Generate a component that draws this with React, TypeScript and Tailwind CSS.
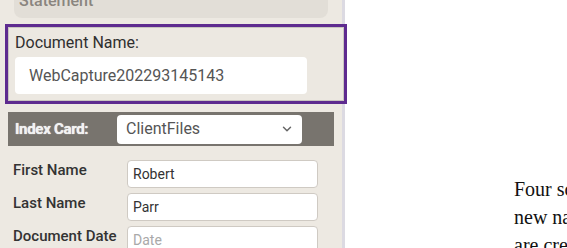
import { ChevronDown } from 'lucide-react';

const fields = [
    { label: 'First Name', value: 'Robert' },
    { label: 'Last Name', value: 'Parr' },
    { label: 'Document Date', value: '', placeholder: 'Date' },
];

export default function App() {
    return (
        <div className="flex h-[248px] w-[567px] overflow-hidden bg-white font-['Roboto',sans-serif]">
            {/* Sidebar */}
            <div className="relative z-10 flex w-[342px] shrink-0 flex-col bg-[#ede9e2]">
                <div className="mx-[14px] -mt-[14px] h-[32px] shrink-0 rounded-b-[8px] bg-[#e2ded7] px-[5px] pt-[6px] text-[16px] font-medium leading-[18px] text-[#8a857f]">
                    Statement
                </div>

                {/* Highlighted document name */}
                <div className="ml-[5px] mt-[6px] h-[80px] w-[342px] shrink-0 border-[3px] border-[#5e2b8f] bg-[#ece8e1] shadow-[inset_0_0_0_1px_#c9c5bf]">
                    <div className="pl-[7px] pt-[6px] text-[16px] leading-[19px] text-[#2f2f2f]">Document Name:</div>
                    <div className="ml-[7px] mt-[5px] flex h-[37px] w-[292px] items-center rounded-[4px] bg-white pl-[14px] text-[16px] text-[#555]">
                        WebCapture202293145143
                    </div>
                </div>

                {/* Index card selector */}
                <div className="mx-[8px] mt-[8px] flex h-[34px] shrink-0 items-center bg-[#78746e] pl-[7px]">
                    <span className="w-[102px] text-[15px] font-bold tracking-[-0.3px] text-[#f2f2f2] [text-shadow:0_0_1px_#fff]">Index Card:</span>
                    <div className="flex h-[29px] w-[185px] items-center justify-between rounded-[4px] bg-white pl-[9px] pr-[8px] text-[16px] text-[#555]">
                        ClientFiles
                        <ChevronDown className="h-[14px] w-[14px] text-[#666]" strokeWidth={2.5} />
                    </div>
                </div>

                {/* Fields */}
                <div className="mt-[14px] flex shrink-0 flex-col gap-[5px] pl-[13px]">
                    {fields.map((f) => (
                        <div key={f.label} className="flex items-start">
                            <span className="w-[114px] pt-[1px] text-[15px] font-medium leading-[18px] text-[#333]">{f.label}</span>
                            <div className="flex h-[28px] w-[191px] items-center rounded-[4px] border border-[#cfcac3] bg-white pl-[5px] text-[14px] text-[#333]">
                                {f.value || <span className="text-[#a9a9a9]">{f.placeholder}</span>}
                            </div>
                        </div>
                    ))}
                </div>
            </div>

            {/* Divider */}
            <div className="w-[3px] shrink-0 bg-[#dcdae2]" />

            {/* Document preview */}
            <div className="flex-1 overflow-hidden pl-[169px] pt-[175px] font-['Liberation_Serif',serif] text-[20px] leading-[28px] text-[#111]">
                <p className="whitespace-nowrap">Four score and seven years ago our fathers brought forth on this continent, a</p>
                <p className="whitespace-nowrap">new nation, conceived in Liberty, and dedicated to the proposition that all men</p>
                <p className="whitespace-nowrap">are created equal.</p>
            </div>
        </div>
    );
}
